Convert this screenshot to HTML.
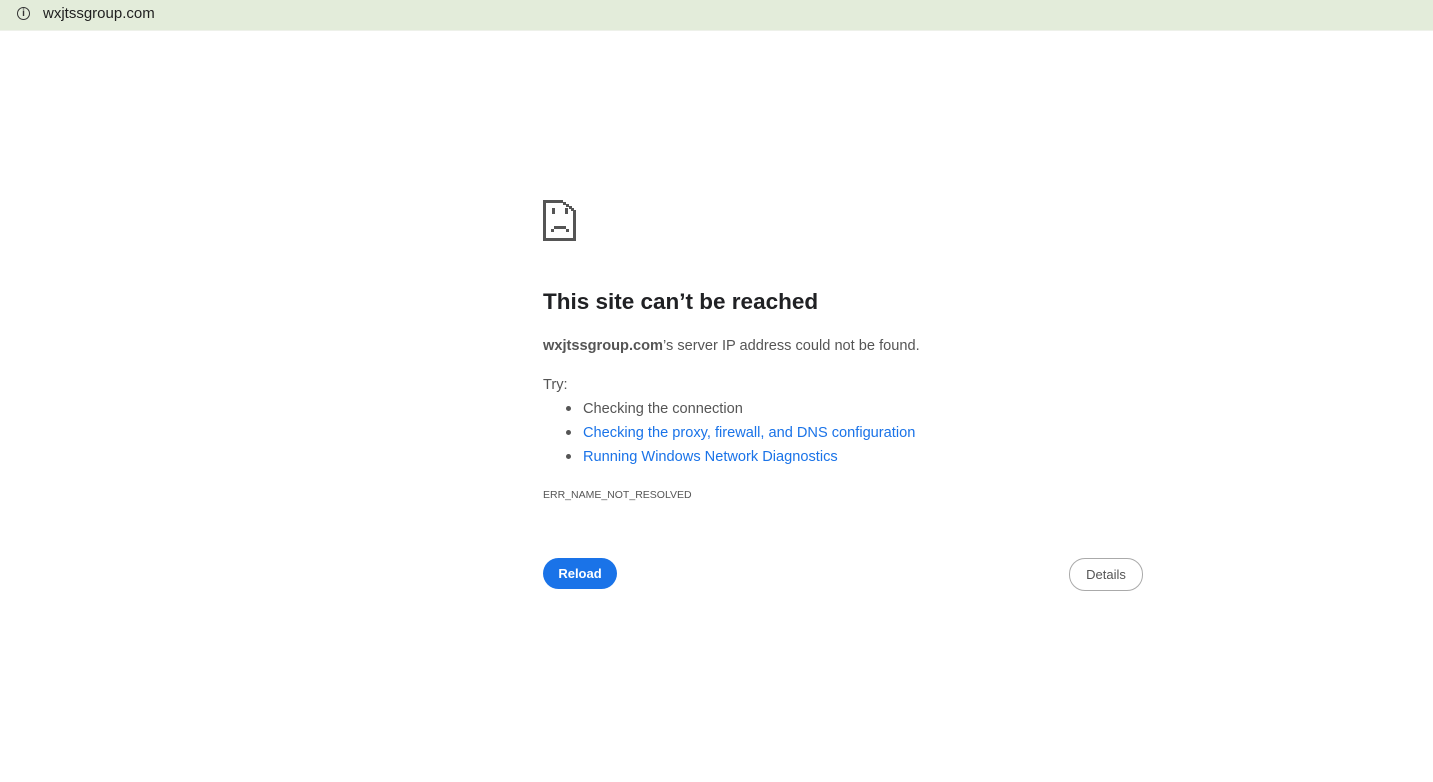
<!DOCTYPE html>
<html><head><meta charset="utf-8"><style>
body{margin:0;width:1433px;height:782px;background:#fff;font-family:"Liberation Sans",sans-serif;position:relative;overflow:hidden}
.bar{position:absolute;left:0;top:0;width:1433px;height:30px;background:#e3ecda;border-bottom:1px solid #eef1ea}
.url{position:absolute;left:43px;top:5px;font-size:15px;color:#1f1f1f}
.info{position:absolute;left:17px;top:7px;width:11px;height:11px;border:1.6px solid #333;border-radius:50%;font-size:10px;font-weight:bold;text-align:center;line-height:11px;color:#333}
.t{position:absolute;left:543px;white-space:nowrap}
h1{position:absolute;left:543px;top:289px;margin:0;font-size:22.5px;font-weight:bold;color:#202124}
.g{color:#555;font-size:14.6px}
.a{color:#1a73e8;font-size:14.6px}
.dot{position:absolute;left:566px;width:5px;height:5px;border-radius:50%;background:#555}
.btn{position:absolute;top:558px;height:31px;border-radius:16px;font-size:13px;text-align:center;line-height:31px}
</style></head><body>
<div class="bar"></div>
<div class="info">i</div>
<div class="url">wxjtssgroup.com</div>
<svg style="position:absolute;left:543px;top:200px" width="34" height="41" viewBox="0 0 34 41" shape-rendering="crispEdges" fill="#555">
<rect x="0" y="0" width="3" height="41"/><rect x="0" y="38" width="33" height="3"/><rect x="30" y="10" width="3" height="31"/>
<rect x="0" y="0" width="20" height="3"/>
<rect x="20" y="2" width="3" height="3"/><rect x="23" y="4" width="3" height="3"/><rect x="26" y="6" width="3" height="3"/><rect x="28" y="8" width="3" height="3"/>
<rect x="9" y="8" width="3" height="6"/><rect x="22" y="8" width="3" height="6"/>
<rect x="11" y="26" width="12" height="3"/><rect x="8" y="29" width="3" height="3"/><rect x="23" y="29" width="3" height="3"/>
</svg>
<h1>This site can’t be reached</h1>
<div class="t g" style="top:338px"><b>wxjtssgroup.com</b>’s server IP address could not be found.</div>
<div class="t g" style="top:377px">Try:</div>
<div class="dot" style="top:406px"></div><div class="t g" style="left:583px;top:401px">Checking the connection</div>
<div class="dot" style="top:430px"></div><div class="t a" style="left:583px;top:425px">Checking the proxy, firewall, and DNS configuration</div>
<div class="dot" style="top:454px"></div><div class="t a" style="left:583px;top:449px">Running Windows Network Diagnostics</div>
<div class="t g" style="top:489px;font-size:10.5px">ERR_NAME_NOT_RESOLVED</div>
<div class="btn" style="left:543px;width:74px;background:#1a73e8;color:#fff;font-weight:bold">Reload</div>
<div class="btn" style="left:1069px;width:72px;border:1px solid #aaa;color:#555;height:31px">Details</div>
</body></html>
